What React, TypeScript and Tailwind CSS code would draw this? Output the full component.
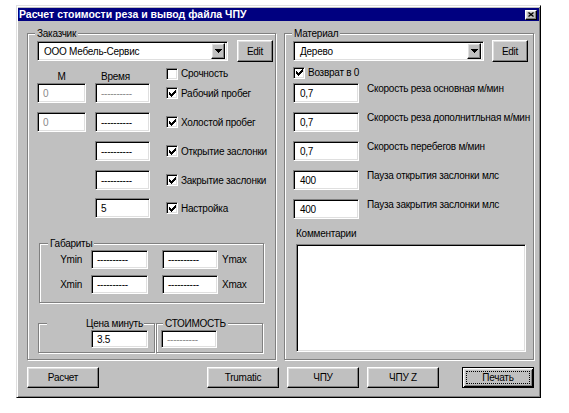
import type { ReactNode } from "react";

const sunken =
  "border border-t-[#808080] border-l-[#808080] border-b-white border-r-white shadow-[inset_1px_1px_0_#000,inset_-1px_-1px_0_#dfdfdf]";
const raised =
  "border border-t-white border-l-white border-b-black border-r-black shadow-[inset_-1px_-1px_0_#808080,inset_1px_1px_0_#dfdfdf]";
const etched = "min-w-0 border border-[#808080] shadow-[inset_1px_1px_0_#fff,1px_1px_0_#fff]";

/** Sunken edit box */
function Field({
  value,
  className,
  disabled
}: {
  value?: string;
  className: string;
  disabled?: boolean;
}) {
  return (
    <div
      className={`${sunken} ${className} flex shrink-0 items-center bg-white pl-[5px] ${
        disabled ? "text-[#8a8a8a]" : "text-black"
      }`}>
      {value}
    </div>
  );
}

function Check({ label, checked }: { label: string; checked?: boolean }) {
  return (
    <div className="flex items-center gap-[3px] whitespace-nowrap">
      <span className={`${sunken} flex h-[12px] w-[12px] items-center justify-center bg-white`}>
        {checked && (
          <svg width="7" height="7" viewBox="0 0 7 7" shapeRendering="crispEdges">
            <path d="M6 0h1v3h-1v1h-1v1h-1v1h-1v1h-1v-1h-1v-1h-1v-3h1v1h1v1h1v-1h1v-1h1z" fill="#000" />
          </svg>
        )}
      </span>
      <span>{label}</span>
    </div>
  );
}

function Button({ children, className, isDefault }: { children: ReactNode; className: string; isDefault?: boolean }) {
  if (isDefault) {
    return (
      <button
        type="button"
        className={`${className} flex h-[21px] w-[72px] shrink-0 items-center justify-center border border-black bg-[#c0c0c0] p-[3px] shadow-[inset_1px_1px_0_#fff,inset_-1px_-1px_0_#000,inset_2px_2px_0_#dfdfdf,inset_-2px_-2px_0_#808080]`}>
        <span className="flex h-full w-full items-center justify-center border border-dotted border-black">
          {children}
        </span>
      </button>
    );
  }
  return (
    <button
      type="button"
      className={`${raised} ${className} flex h-[21px] w-[72px] shrink-0 items-center justify-center bg-[#c0c0c0]`}>
      {children}
    </button>
  );
}

function Combo({ value }: { value: string }) {
  return (
    <div className={`${sunken} flex h-[20px] w-[191px] items-center justify-between bg-white pl-[6px] pr-[2px]`}>
      <span>{value}</span>
      <span className={`${raised} flex h-[16px] w-[14px] items-center justify-center bg-[#c0c0c0]`}>
        <svg width="7" height="4" viewBox="0 0 7 4" shapeRendering="crispEdges">
          <path d="M0 0h7v1h-1v1h-1v1h-1v1h-1v-1h-1v-1h-1v-1h-1z" fill="#000" />
        </svg>
      </span>
    </div>
  );
}

const dashes = "----------";

const speeds = [
  { value: "0,7", label: "Скорость реза основная м/мин" },
  { value: "0,7", label: "Скорость реза дополнитльная м/мин" },
  { value: "0,7", label: "Скорость перебегов м/мин" },
  { value: "400", label: "Пауза открытия заслонки млс" },
  { value: "400", label: "Пауза закрытия заслонки млс" }
];

export default function App() {
  return (
    <div className="min-h-[413px] bg-white pl-[16px] pt-[5px] font-['Liberation_Sans',Arial,sans-serif] text-[10px] leading-[13px] tracking-[-0.25px] text-black">
      <div className="flex h-[393px] w-[525px] flex-col border border-t-[#dfdfdf] border-l-[#dfdfdf] border-b-black border-r-black bg-[#c0c0c0] px-[1px] pt-[2px] shadow-[inset_1px_1px_0_#fff,inset_-1px_-1px_0_#808080]">
        {/* title bar */}
        <div className="flex h-[13px] items-center justify-between bg-[#000080] pl-[1px] pr-[2px]">
          <span className="text-[10.5px] font-bold tracking-normal whitespace-nowrap text-white">
            Расчет стоимости реза и вывод файла ЧПУ
          </span>
          <span className={`${raised} flex h-[10px] w-[12px] items-center justify-center bg-[#c0c0c0]`}>
            <svg width="6" height="5" viewBox="0 0 6 5">
              <path d="M0.5 0.5L5.5 4.5M5.5 0.5L0.5 4.5" stroke="#000" strokeWidth="1.3" />
            </svg>
          </span>
        </div>

        <div className="ml-[9px] mt-[6px] flex gap-[8px] whitespace-nowrap">
          {/* Заказчик */}
          <fieldset className={`${etched} h-[333px] w-[249px] shrink-0`}>
            <legend className="ml-[7px] bg-[#c0c0c0] px-[2px]">Заказчик</legend>
            <div className="ml-[9px] flex h-[22px] items-center gap-[9px]">
              <Combo value="ООО Мебель-Сервис" />
              <Button className="!h-[22px] !w-[36px]">Edit</Button>
            </div>
            <div className="ml-[9px] mt-[2px] flex h-[19px]">
              <span className="w-[49px] self-end text-center">М</span>
              <span className="ml-[9px] w-[55px] self-end pl-[6px]">Время</span>
              <div className="ml-[16px] mt-[3px]">
                <Check label="Срочность" />
              </div>
            </div>
            <div className="ml-[9px] mt-0 flex h-[20px] items-center">
              <Field className="h-[20px] w-[49px]" value="0" disabled />
              <Field className="ml-[9px] h-[20px] w-[55px]" value={dashes} disabled />
              <div className="ml-[16px]">
                <Check label="Рабочий пробег" checked />
              </div>
            </div>
            <div className="ml-[9px] mt-[9px] flex h-[20px] items-center">
              <Field className="h-[20px] w-[49px]" value="0" disabled />
              <Field className="ml-[9px] h-[20px] w-[55px]" value={dashes} />
              <div className="ml-[16px]">
                <Check label="Холостой пробег" checked />
              </div>
            </div>
            <div className="ml-[67px] mt-[9px] flex h-[20px] items-center">
              <Field className="h-[20px] w-[55px]" value={dashes} />
              <div className="ml-[16px]">
                <Check label="Открытие заслонки" checked />
              </div>
            </div>
            <div className="ml-[67px] mt-[9px] flex h-[20px] items-center">
              <Field className="h-[20px] w-[55px]" value={dashes} />
              <div className="ml-[16px]">
                <Check label="Закрытие заслонки" checked />
              </div>
            </div>
            <div className="ml-[67px] mt-[8px] flex h-[20px] items-center">
              <Field className="h-[20px] w-[55px]" value="5" />
              <div className="ml-[16px]">
                <Check label="Настройка" checked />
              </div>
            </div>

            {/* Габариты */}
            <fieldset className={`${etched} ml-[11px] mt-[19px] h-[66px] w-[225px]`}>
              <legend className="ml-[8px] bg-[#c0c0c0] px-[2px]">Габариты</legend>
              <div className="flex h-[19px] items-center">
                <span className="w-[42px] text-right">Ymin</span>
                <Field className="ml-[9px] h-[19px] w-[57px]" value={dashes} />
                <Field className="ml-[14px] h-[19px] w-[56px]" value={dashes} />
                <span className="ml-[4px]">Ymax</span>
              </div>
              <div className="mt-[6px] flex h-[19px] items-center">
                <span className="w-[42px] text-right">Xmin</span>
                <Field className="ml-[9px] h-[19px] w-[57px]" value={dashes} />
                <Field className="ml-[14px] h-[19px] w-[56px]" value={dashes} />
                <span className="ml-[4px]">Xmax</span>
              </div>
            </fieldset>

            <div className="ml-[10px] mt-[14px] flex gap-[1px]">
              <fieldset className={`${etched} h-[36px] w-[117px]`}>
                <legend className="ml-[8px] bg-[#c0c0c0] pl-[39px] pr-[1px]">Цена минуть</legend>
                <Field className="ml-[52px] h-[18px] w-[57px]" value="3.5" />
              </fieldset>
              <fieldset className={`${etched} h-[36px] w-[107px]`}>
                <legend className="ml-[6px] bg-[#c0c0c0] px-[2px]">СТОИМОСТЬ</legend>
                <Field className="ml-[4px] h-[18px] w-[56px]" value={dashes} disabled />
              </fieldset>
            </div>
          </fieldset>

          {/* Материал */}
          <fieldset className={`${etched} h-[333px] w-[250px] shrink-0`}>
            <legend className="ml-[7px] bg-[#c0c0c0] px-[2px]">Материал</legend>
            <div className="ml-[8px] flex h-[22px] items-center gap-[8px]">
              <Combo value="Дерево" />
              <Button className="!h-[22px] !w-[36px]">Edit</Button>
            </div>
            <div className="ml-[8px] flex h-[21px] items-center">
              <Check label="Возврат в 0" checked />
            </div>
            {speeds.map((s, i) => (
              <div key={i} className={`ml-[8px] flex h-[20px] items-start ${i === 0 ? "" : "mt-[9px]"}`}>
                <Field className="h-[20px] w-[66px] pl-[6px]" value={s.value} />
                <span className="ml-[8px] -mt-[1px]">{s.label}</span>
              </div>
            ))}
            <div className="ml-[11px] mt-[8px]">Комментарии</div>
            <div className={`${sunken} ml-[11px] mt-[4px] h-[108px] w-[230px] bg-white`} />
          </fieldset>
        </div>

        <div className="mt-[7px] flex">
          <Button className="ml-[9px]">Расчет</Button>
          <Button className="ml-[108px]">Trumatic</Button>
          <Button className="ml-[8px]">ЧПУ</Button>
          <Button className="ml-[8px]">ЧПУ Z</Button>
          <Button className="ml-[23px]" isDefault>
            Печать
          </Button>
        </div>
      </div>
    </div>
  );
}
